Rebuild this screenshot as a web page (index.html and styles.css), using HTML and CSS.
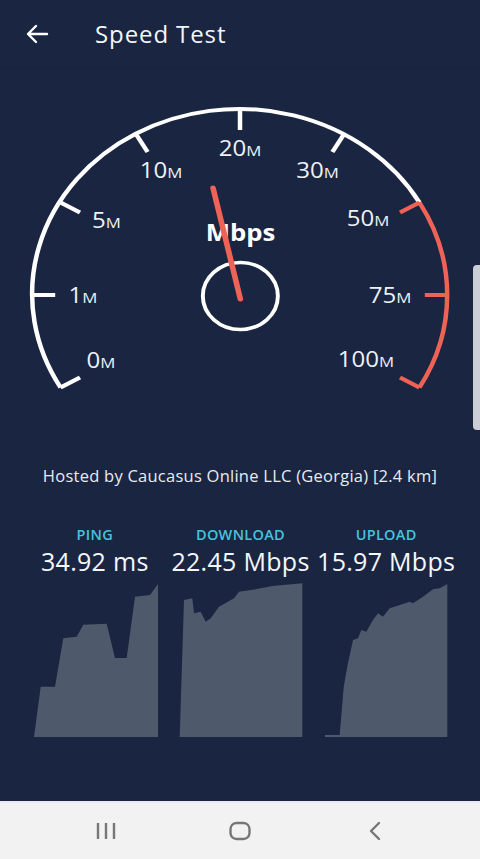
FILE: index.html
```html
<!DOCTYPE html>
<html lang="en">
<head>
    <meta charset="UTF-8">
    <meta name="viewport" content="width=device-width, initial-scale=1.0">
    <link rel="stylesheet" href="styles.css">
</head>
<body>
    <div class="screen">
        <header class="top-bar">
            <svg class="back-icon" viewBox="0 0 24 24" width="24" height="24">
                <path d="M22 12H3M11 4L3 12L11 20" fill="none" stroke="#fff" stroke-width="2.4" stroke-linecap="round" stroke-linejoin="round"/>
            </svg>
            <h1 class="title">Speed Test</h1>
        </header>

        <main class="content">
            <svg class="gauge" viewBox="0 0 428.57 372" width="480" height="372" preserveAspectRatio="none">
                <!-- scale arc -->
                <path d="M54.08 319.5A185 185 0 1 1 374.5 134.5" fill="none" stroke="#fff" stroke-width="4"/>
                <path d="M374.5 134.5A185 185 0 0 1 374.5 319.5" fill="none" stroke="#ee6356" stroke-width="4"/>

                <g stroke="#fff" stroke-width="4">
                    <line x1="54.08" y1="319.5" x2="71.4" y2="309.5"/>
                    <line x1="29.29" y1="227" x2="49.29" y2="227"/>
                    <line x1="54.08" y1="134.5" x2="71.4" y2="144.5"/>
                    <line x1="121.79" y1="66.79" x2="131.79" y2="84.11"/>
                    <line x1="214.29" y1="42" x2="214.29" y2="62"/>
                    <line x1="306.79" y1="66.79" x2="296.79" y2="84.11"/>
                </g>
                <g stroke="#ee6356" stroke-width="4">
                    <line x1="374.5" y1="134.5" x2="357.18" y2="144.5"/>
                    <line x1="399.29" y1="227" x2="379.29" y2="227"/>
                    <line x1="374.5" y1="319.5" x2="357.18" y2="309.5"/>
                </g>

                <g class="scale-label">
                    <text x="90.2" y="300">0<tspan class="unit">M</tspan></text>
                    <text x="74.1" y="235">1<tspan class="unit">M</tspan></text>
                    <text x="95.1" y="160">5<tspan class="unit">M</tspan></text>
                    <text x="143.8" y="110">10<tspan class="unit">M</tspan></text>
                    <text x="214.3" y="88">20<tspan class="unit">M</tspan></text>
                    <text x="283.5" y="110">30<tspan class="unit">M</tspan></text>
                    <text x="328.6" y="158.5">50<tspan class="unit">M</tspan></text>
                    <text x="348.2" y="235">75<tspan class="unit">M</tspan></text>
                    <text x="326.8" y="299">100<tspan class="unit">M</tspan></text>
                </g>

                <text class="gauge-unit" x="214.7" y="173.5">Mbps</text>
                <circle cx="214.6" cy="228" r="33.5" fill="none" stroke="#fff" stroke-width="3.5"/>
                <line x1="190.2" y1="120" x2="214.6" y2="231" stroke="#ee6356" stroke-width="5" stroke-linecap="round"/>
            </svg>

            <p class="host">Hosted by Caucasus Online LLC (Georgia) [2.4 km]</p>

            <div class="stats">
                <div class="stat">
                    <div class="stat-label">PING</div>
                    <div class="stat-value">34.92 ms</div>
                    <svg class="chart" viewBox="0 0 124 154" width="124" height="154" preserveAspectRatio="none">
                        <polygon points="0,154 6.7,103.7 21,103.7 29.3,55.3 42.7,53.7 49.3,41.7 72.7,40.7 81,75 92.7,75 101,13.7 116,12 124,1 124,154"/>
                    </svg>
                </div>
                <div class="stat">
                    <div class="stat-label">DOWNLOAD</div>
                    <div class="stat-value">22.45 Mbps</div>
                    <svg class="chart" viewBox="0 0 124 154" width="124" height="154" preserveAspectRatio="none">
                        <polygon points="0.7,154 5,17 13.3,15.3 15,30.3 21.7,28.7 26.7,38.7 31.7,35.3 40,23.7 55,15.3 60,8.7 76.7,6.3 93.3,3 123.3,0.3 123.3,154"/>
                    </svg>
                </div>
                <div class="stat">
                    <div class="stat-label">UPLOAD</div>
                    <div class="stat-value">15.97 Mbps</div>
                    <svg class="chart" viewBox="0 0 124 154" width="124" height="154" preserveAspectRatio="none">
                        <polygon points="0,154 0,152 14.7,152 18.7,103.7 23,80 28,57 33,55.3 36.3,47 41.3,48.7 48,37 53,30.3 58,33.7 64.7,25.3 74.7,22 84.7,18.7 88,20.3 98,13.7 108,6.3 114.7,5.3 122.3,1 122.3,154"/>
                    </svg>
                </div>
            </div>

            <div class="scroll-thumb"></div>
        </main>

        <nav class="nav-bar">
            <svg class="nav-icon" viewBox="0 0 24 20" width="24" height="20">
                <path d="M4 2V18M12 2V18M20 2V18" stroke="#777" stroke-width="2.4" fill="none"/>
            </svg>
            <svg class="nav-icon" viewBox="0 0 24 20" width="24" height="20">
                <rect x="2.5" y="2" width="19" height="16" rx="6" stroke="#777" stroke-width="2.4" fill="none"/>
            </svg>
            <svg class="nav-icon" viewBox="0 0 24 20" width="24" height="20">
                <path d="M17 2L9 10L17 18" stroke="#777" stroke-width="2.4" fill="none" stroke-linecap="round" stroke-linejoin="round"/>
            </svg>
        </nav>
    </div>
</body>
</html>
```

FILE: styles.css
```css
body {
    margin: 0;
    font-family: "Open Sans", "Noto Sans", sans-serif;
    background-color: #1a2541;
    color: #fff;
}
.screen {
    display: flex;
    flex-direction: column;
    height: 859px;
}
.top-bar {
    display: flex;
    align-items: center;
    height: 67px;
    padding-left: 25px;
    border-bottom: 1px solid #18223b;
}
.back-icon {
    display: block;
    margin-right: 46px;
}
.title {
    margin: 0;
    font-size: 24px;
    font-weight: 400;
    letter-spacing: 0.9px;
    color: #f4f6fa;
}
.content {
    position: relative;
    flex: 1;
    display: flex;
    flex-direction: column;
}
.gauge {
    display: block;
}
.scale-label text {
    font-size: 21.5px;
    fill: #eef1f5;
    text-anchor: middle;
}
.scale-label .unit {
    font-size: 15px;
}
.gauge-unit {
    font-size: 23px;
    font-weight: 700;
    fill: #fff;
    text-anchor: middle;
}
.host {
    margin: 26px 0 0;
    font-size: 16.5px;
    line-height: 20px;
    letter-spacing: 0.25px;
    text-align: center;
    color: #e8ebf0;
}
.stats {
    display: grid;
    grid-template-columns: repeat(3, 1fr);
    padding: 0 21px 0 22px;
    margin-top: 40px;
}
.stat {
    display: flex;
    flex-direction: column;
    align-items: center;
}
.stat-label {
    font-size: 14.5px;
    line-height: 18px;
    font-weight: 600;
    letter-spacing: 0.3px;
    color: #46c3dc;
}
.stat-value {
    margin-top: 3px;
    font-size: 25px;
    line-height: 28px;
    letter-spacing: 0.3px;
    white-space: nowrap;
    color: #f5f7fa;
}
.chart {
    display: block;
    margin-top: 8px;
    margin-left: 2px;
}
.chart polygon {
    fill: #4e5a6b;
}
.scroll-thumb {
    position: absolute;
    right: 0;
    top: 197px;
    width: 7px;
    height: 165px;
    background-color: #cbced4;
    border-radius: 4px 0 0 4px;
}
.nav-bar {
    display: flex;
    justify-content: center;
    align-items: center;
    gap: 110px;
    height: 56px;
    background-color: #f2f2f2;
    border-top: 2px solid #e6eaf2;
}
.nav-icon {
    display: block;
}
```
